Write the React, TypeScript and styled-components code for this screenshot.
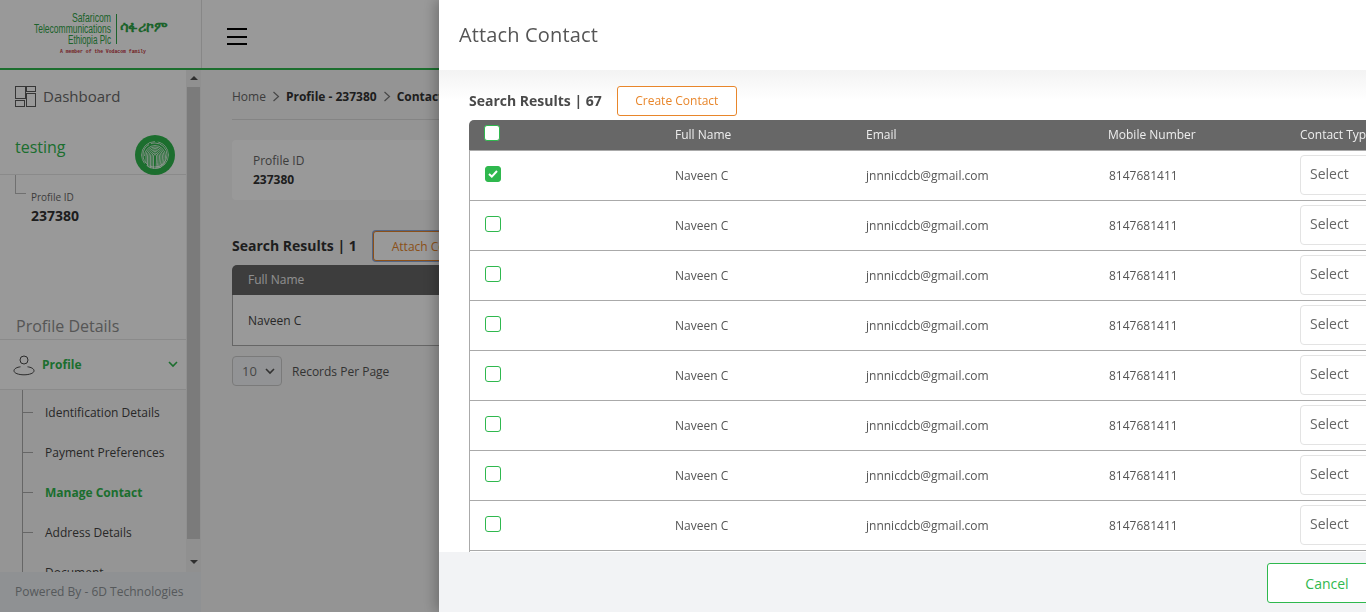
import React from 'react';
import styled, { createGlobalStyle } from 'styled-components';

const GlobalStyle = createGlobalStyle`
  html, body {
    margin: 0;
    height: 100%;
    overflow: hidden;
    font-family: 'Open Sans', 'Liberation Sans', sans-serif;
    background: #fff;
  }
  * { box-sizing: border-box; }
`;

const green = '#2fb84e';
const orange = '#e8862b';

const rows = Array.from({ length: 10 }, (_, i) => ({
  id: i,
  name: 'Naveen C',
  email: 'jnnnicdcb@gmail.com',
  mobile: '8147681411',
  checked: i === 0,
}));

const subMenu = [
  'Identification Details',
  'Payment Preferences',
  'Manage Contact',
  'Address Details',
  'Document',
];

const Logo = () => (
  <svg width="200" height="68" viewBox="0 0 200 68">
    <g fill="#2fa548" fontFamily="Liberation Sans" fontSize="12.5" textAnchor="end">
      <text x="111" y="22" textLength="39" lengthAdjust="spacingAndGlyphs">Safaricom</text>
      <text x="111" y="33" textLength="77" lengthAdjust="spacingAndGlyphs">Telecommunications</text>
      <text x="111" y="44" textLength="43" lengthAdjust="spacingAndGlyphs">Ethiopia Plc</text>
    </g>
    <line x1="116.5" y1="14" x2="116.5" y2="44" stroke="#2fa548" strokeWidth="1" />
    <text x="120" y="32" fill="#2fa548" fontFamily="DejaVu Sans, Noto Sans" fontWeight="bold" fontSize="14" textLength="48" lengthAdjust="spacingAndGlyphs">ሳፋሪኮም</text>
    <text x="60" y="53" fill="#c0303a" fontFamily="Liberation Mono" fontWeight="bold" fontSize="5.5" textLength="86" lengthAdjust="spacingAndGlyphs">A member of the Vodacom family</text>
  </svg>
);

const DashboardIcon = () => (
  <svg width="21" height="21" viewBox="0 0 21 21" fill="none" stroke="#5a5a5a" strokeWidth="1">
    <rect x="0.5" y="0.5" width="10" height="12" />
    <rect x="11.5" y="0.5" width="9" height="5" />
    <rect x="11.5" y="7.5" width="9" height="13" />
    <rect x="0.5" y="14.5" width="9" height="6" />
  </svg>
);

const FingerprintIcon = () => (
  <svg width="40" height="40" viewBox="0 0 40 40">
    <defs>
      <clipPath id="print">
        <circle cx="20" cy="20" r="14" />
      </clipPath>
    </defs>
    <circle cx="20" cy="20" r="20" fill={green} />
    <g fill="none" stroke="#fff" strokeWidth="0.75" clipPath="url(#print)">
      <circle cx="20" cy="20" r="13.5" strokeDasharray="30 3" />
      <circle cx="20" cy="20" r="12" strokeDasharray="24 2" />
      <path d="M9.5 21a10.5 10.5 0 0 1 21 0c0 4-.5 6-2 9" />
      <path d="M11 28v-7a9 9 0 0 1 18 0c0 4-.5 7-2 10" />
      <path d="M12.5 31v-10a7.5 7.5 0 0 1 15 0c0 4-.5 8-2 12" />
      <path d="M14 33V21a6 6 0 0 1 12 0c0 4-.5 8-2 13" />
      <path d="M15.5 34V21a4.5 4.5 0 0 1 9 0c0 4-.5 8-1.5 13" />
      <path d="M17 34V21a3 3 0 0 1 6 0c0 4-.3 8-1 13" />
      <path d="M18.5 34V21a1.5 1.5 0 0 1 3 0c0 4-.2 8-.5 13" />
    </g>
  </svg>
);

const UserIcon = () => (
  <svg width="22" height="22" viewBox="0 0 22 22" fill="none" stroke="#4a4a4a" strokeWidth="1">
    <circle cx="11" cy="6" r="4" />
    <path d="M7.5 12.8C4 13.2 1 14.6 1 16.8 1 19.2 5.5 20.8 11 20.8s10-1.6 10-4c0-2.2-3-3.6-6.5-4" />
  </svg>
);

const Chevron = ({ color = green }: { color?: string }) => (
  <svg width="10" height="7" viewBox="0 0 10 7" fill="none" stroke={color} strokeWidth="1.6">
    <path d="M1 1l4 4 4-4" />
  </svg>
);

const Crumb = () => (
  <svg width="8" height="11" viewBox="0 0 8 11" fill="none" stroke="#777" strokeWidth="1.2">
    <path d="M1.5 1l5 4.5-5 4.5" />
  </svg>
);

const CheckIcon = () => (
  <svg width="10" height="8" viewBox="0 0 10 8" fill="none" stroke="#fff" strokeWidth="2">
    <path d="M1 4l2.8 2.6L9 1" />
  </svg>
);

export default function App() {
  return (
    <>
      <GlobalStyle />
      <Shell>
        <Header>
          <LogoCell>
            <Logo />
          </LogoCell>
          <Hamburger>
            <span />
            <span />
            <span />
          </Hamburger>
        </Header>
        <Body>
          <Sidebar>
            <SideScroll>
              <SideContent>
                <DashboardRow>
                  <DashboardIcon />
                  <span>Dashboard</span>
                </DashboardRow>
                <ProfileHead>
                  <Testing>testing</Testing>
                  <FingerprintIcon />
                </ProfileHead>
                <TreeInfo>
                  <TreeLine />
                  <div>
                    <InfoLabel>Profile ID</InfoLabel>
                    <InfoValue>237380</InfoValue>
                  </div>
                </TreeInfo>
                <SectionTitle>Profile Details</SectionTitle>
                <ProfileRow>
                  <UserIcon />
                  <ProfileLabel>Profile</ProfileLabel>
                  <Chevron />
                </ProfileRow>
                <SubPanel>
                  <SubList>
                    {subMenu.map((item) => (
                      <SubItem key={item} $active={item === 'Manage Contact'}>
                        <Tick />
                        {item}
                      </SubItem>
                    ))}
                  </SubList>
                </SubPanel>
              </SideContent>
              <ScrollTrack>
                <ScrollUp />
                <ScrollThumb />
                <ScrollDown />
              </ScrollTrack>
            </SideScroll>
            <PoweredBy>Powered By - 6D Technologies</PoweredBy>
          </Sidebar>
          <Main>
            <Breadcrumb>
              <span>Home</span>
              <Crumb />
              <b>Profile - 237380</b>
              <Crumb />
              <b>Contact</b>
            </Breadcrumb>
            <InfoCard>
              <InfoCol>
                <CardLabel>Profile ID</CardLabel>
                <CardValue>237380</CardValue>
              </InfoCol>
              <InfoCol>
                <CardLabel>Customer Name</CardLabel>
                <CardValue>testing</CardValue>
              </InfoCol>
            </InfoCard>
            <ResultBar>
              <ResultTitle>Search Results | 1</ResultTitle>
              <AttachButton>Attach Contact</AttachButton>
            </ResultBar>
            <MainTableHead>Full Name</MainTableHead>
            <MainTableRow>Naveen C</MainTableRow>
            <PagerRow>
              <PageSelect>
                <span>10</span>
                <Chevron color="#555" />
              </PageSelect>
              <span>Records Per Page</span>
            </PagerRow>
          </Main>
        </Body>
      </Shell>
      <Overlay />
      <Drawer>
        <DrawerHeader>Attach Contact</DrawerHeader>
        <DrawerBody>
          <DrawerTop>
            <DrawerCount>Search Results | 67</DrawerCount>
            <CreateButton>Create Contact</CreateButton>
          </DrawerTop>
          <TableHead>
            <CheckCell>
              <HeadCheck />
            </CheckCell>
            <div>Full Name</div>
            <div>Email</div>
            <div>Mobile Number</div>
            <div>Contact Type</div>
          </TableHead>
          {rows.map((r) => (
            <TableRow key={r.id}>
              <CheckCell>
                <RowCheck $checked={r.checked}>{r.checked && <CheckIcon />}</RowCheck>
              </CheckCell>
              <div>{r.name}</div>
              <div>{r.email}</div>
              <div>{r.mobile}</div>
              <SelectBox>Select</SelectBox>
            </TableRow>
          ))}
        </DrawerBody>
        <DrawerFooter>
          <CancelButton>Cancel</CancelButton>
        </DrawerFooter>
      </Drawer>
    </>
  );
}

const Shell = styled.div`
  height: 100vh;
  display: flex;
  flex-direction: column;
  overflow: hidden;
  background: #fdfdfd;
`;

const Header = styled.header`
  height: 70px;
  flex: none;
  display: flex;
  background: #fff;
  border-bottom: 2px solid ${green};
`;

const LogoCell = styled.div`
  width: 202px;
  flex: none;
  border-right: 1px solid #e2e2e2;
`;

const Hamburger = styled.div`
  margin-left: 25px;
  margin-top: 28px;
  width: 20px;
  display: flex;
  flex-direction: column;
  gap: 5.5px;

  span {
    display: block;
    height: 2px;
    background: #000;
  }
`;

const Body = styled.div`
  flex: 1;
  min-height: 0;
  display: flex;
`;

const Sidebar = styled.aside`
  width: 201px;
  flex: none;
  display: flex;
  flex-direction: column;
  background: #fff;
`;

const SideScroll = styled.div`
  flex: 1;
  min-height: 0;
  display: flex;
`;

const SideContent = styled.div`
  width: 186px;
  flex: none;
  overflow: hidden;
`;

const ScrollTrack = styled.div`
  width: 15px;
  flex: none;
  display: flex;
  flex-direction: column;
  align-items: center;
  background: #f1f1f1;
`;

const ScrollUp = styled.div`
  margin-top: 6px;
  width: 0;
  height: 0;
  border-left: 4px solid transparent;
  border-right: 4px solid transparent;
  border-bottom: 4px solid #505050;
`;

const ScrollThumb = styled.div`
  margin-top: 7px;
  width: 13px;
  height: 452px;
  background: #cdcdcd;
`;

const ScrollDown = styled.div`
  margin-top: 21px;
  width: 0;
  height: 0;
  border-left: 4px solid transparent;
  border-right: 4px solid transparent;
  border-top: 4px solid #505050;
`;

const DashboardRow = styled.div`
  height: 52px;
  padding: 0 0 0 15px;
  display: flex;
  align-items: center;
  gap: 7px;
  font-size: 15px;
  color: #6a6a6a;
`;

const ProfileHead = styled.div`
  height: 53px;
  padding: 13px 11px 0 15px;
  display: flex;
  justify-content: space-between;
  align-items: flex-start;
  border-bottom: 1px solid #e6e6e6;
`;

const Testing = styled.div`
  font-size: 16px;
  line-height: 24px;
  color: ${green};
`;

const TreeInfo = styled.div`
  display: flex;
  height: 139px;
  padding-left: 15px;
`;

const TreeLine = styled.div`
  width: 11px;
  height: 19px;
  border-left: 1px solid #bbb;
  border-bottom: 1px solid #bbb;
`;

const InfoLabel = styled.div`
  margin: 15px 0 0 5px;
  font-size: 10px;
  line-height: 14px;
  color: #666;
`;

const InfoValue = styled.div`
  margin: 3px 0 0 5px;
  font-size: 14px;
  line-height: 18px;
  font-weight: 700;
  color: #333;
`;

const SectionTitle = styled.div`
  height: 26px;
  padding-left: 16px;
  font-size: 16px;
  line-height: 24px;
  color: #8f8f8f;
  border-bottom: 1px solid #e6e6e6;
`;

const ProfileRow = styled.div`
  height: 50px;
  padding: 0 8px 0 13px;
  display: flex;
  align-items: center;
  gap: 7px;
  background: #fff;
  border-bottom: 1px solid #e6e6e6;
`;

const ProfileLabel = styled.span`
  flex: 1;
  font-size: 12px;
  font-weight: 700;
  color: ${green};
`;

const SubPanel = styled.div`
  padding-left: 22px;
  background: #f9f9f9;
`;

const SubList = styled.div`
  padding-top: 2px;
  border-left: 1px solid #aaa;
`;

const SubItem = styled.div<{ $active?: boolean }>`
  height: 40px;
  display: flex;
  align-items: center;
  white-space: nowrap;
  font-size: 12px;
  font-weight: ${(p) => (p.$active ? 700 : 400)};
  color: ${(p) => (p.$active ? green : '#444')};
`;

const Tick = styled.span`
  width: 10px;
  height: 1px;
  margin-right: 12px;
  background: #aaa;
  flex: none;
`;

const PoweredBy = styled.div`
  height: 40px;
  flex: none;
  padding: 11px 0 0 15px;
  font-size: 12px;
  line-height: 18px;
  color: #8f9498;
  background: #eef2f5;
`;

const Main = styled.main`
  flex: 1;
  min-width: 0;
  padding: 0 0 0 31px;
  background: #f7f7f7;
`;

const Breadcrumb = styled.div`
  height: 50px;
  padding-top: 4px;
  display: flex;
  align-items: center;
  gap: 6px;
  font-size: 12px;
  color: #666;
  border-bottom: 1px solid #ddd;
  white-space: nowrap;

  b {
    color: #333;
    font-weight: 700;
  }
`;

const InfoCard = styled.div`
  margin-top: 20px;
  height: 60px;
  padding: 12px 21px;
  display: flex;
  gap: 150px;
  background: #fff;
  border-radius: 4px;
`;

const InfoCol = styled.div`
  min-width: 33px;
`;

const CardLabel = styled.div`
  font-size: 12px;
  line-height: 18px;
  color: #666;
  white-space: nowrap;
`;

const CardValue = styled.div`
  margin-top: 1px;
  font-size: 12px;
  line-height: 18px;
  font-weight: 700;
  color: #333;
`;

const ResultBar = styled.div`
  margin-top: 31px;
  height: 30px;
  display: flex;
  align-items: center;
  gap: 16px;
`;

const ResultTitle = styled.div`
  padding-bottom: 2px;
  font-size: 14px;
  font-weight: 700;
  color: #333;
`;

const AttachButton = styled.div`
  width: 120px;
  height: 30px;
  display: flex;
  align-items: center;
  justify-content: center;
  font-size: 12px;
  color: ${orange};
  background: #fff;
  border: 1px solid ${orange};
  border-radius: 3px;
  box-shadow: 0 0 0 1px #8fa8d8;
  white-space: nowrap;
`;

const MainTableHead = styled.div`
  margin-top: 4px;
  height: 30px;
  padding: 0 0 2px 16px;
  display: flex;
  align-items: center;
  font-size: 12px;
  color: #eee;
  background: #666;
  border-radius: 5px 0 0 0;
`;

const MainTableRow = styled.div`
  height: 51px;
  padding-left: 15px;
  display: flex;
  align-items: center;
  font-size: 12px;
  color: #444;
  background: #fff;
  border-left: 1px solid #aaa;
  border-bottom: 1px solid #aaa;
`;

const PagerRow = styled.div`
  margin-top: 10px;
  display: flex;
  align-items: center;
  gap: 10px;
  font-size: 12px;
  color: #555;
`;

const PageSelect = styled.div`
  width: 50px;
  height: 30px;
  padding: 0 6px 0 9px;
  display: flex;
  align-items: center;
  justify-content: space-between;
  font-size: 13px;
  color: #777;
  background: #f4f6f8;
  border: 1px solid #ccc;
  border-radius: 4px;
`;

const Overlay = styled.div`
  position: fixed;
  inset: 0;
  background: rgba(0, 0, 0, 0.4);
`;

const Drawer = styled.section`
  position: fixed;
  top: 0;
  bottom: 0;
  left: 439px;
  width: 1000px;
  display: flex;
  flex-direction: column;
  background: #fff;
  box-shadow: -4px 0 12px rgba(0, 0, 0, 0.25);
`;

const DrawerHeader = styled.div`
  height: 70px;
  flex: none;
  padding: 0 0 2px 20px;
  display: flex;
  align-items: center;
  font-size: 20px;
  letter-spacing: 0.15px;
  color: #555;
`;

const DrawerBody = styled.div`
  flex: 1;
  min-height: 0;
  overflow: hidden;
  padding: 16px 0 0 30px;
  background: linear-gradient(#f3f3f3, #fff 30px);
`;

const DrawerTop = styled.div`
  height: 30px;
  display: flex;
  align-items: center;
  gap: 15px;
`;

const DrawerCount = styled.div`
  padding-bottom: 2px;
  font-size: 14px;
  font-weight: 700;
  color: #4a4a4a;
`;

const CreateButton = styled.div`
  width: 120px;
  height: 30px;
  display: flex;
  align-items: center;
  justify-content: center;
  padding-bottom: 1px;
  font-size: 12px;
  color: ${orange};
  background: #fff;
  border: 1px solid ${orange};
  border-radius: 3px;
`;

const TableHead = styled.div`
  margin-top: 4px;
  height: 31px;
  padding-bottom: 2px;
  display: grid;
  grid-template-columns: 206px 191px 242px 192px 1fr;
  align-items: center;
  font-size: 12px;
  font-weight: 500;
  color: #eee;
  background: #676767;
  border-bottom: 1px solid #aaa;
  border-radius: 5px 0 0 0;
`;

const TableRow = styled.div`
  height: 50px;
  display: grid;
  grid-template-columns: 205px 191px 243px 191px 1fr;
  align-items: center;
  font-size: 12px;
  color: #555;
  border-left: 1px solid #aaa;
  border-bottom: 1px solid #aaa;
`;

const CheckCell = styled.div`
  padding-left: 15px;
  display: flex;
`;

const HeadCheck = styled.div`
  width: 16px;
  height: 16px;
  margin-top: -2px;
  background: #fff;
  border: 1px solid ${green};
  border-radius: 3px;
`;

const RowCheck = styled.div<{ $checked?: boolean }>`
  width: 16px;
  height: 16px;
  margin-top: -4px;
  display: flex;
  align-items: center;
  justify-content: center;
  background: ${(p) => (p.$checked ? green : '#fff')};
  border: 1px solid ${green};
  border-radius: 3px;
`;

const SelectBox = styled.div`
  align-self: start;
  margin-top: 4px;
  width: 180px;
  height: 40px;
  padding: 0 9px 3px;
  display: flex;
  align-items: center;
  font-size: 14px;
  color: #666;
  background: #fff;
  border: 1px solid #e3e3e3;
  border-radius: 4px;
`;

const DrawerFooter = styled.div`
  height: 60px;
  flex: none;
  padding: 11px 0 0 828px;
  background: #f2f3f5;
`;

const CancelButton = styled.div`
  width: 120px;
  height: 40px;
  display: flex;
  align-items: center;
  justify-content: center;
  font-size: 14px;
  color: ${green};
  background: #fff;
  border: 1px solid ${green};
  border-radius: 3px;
`;
